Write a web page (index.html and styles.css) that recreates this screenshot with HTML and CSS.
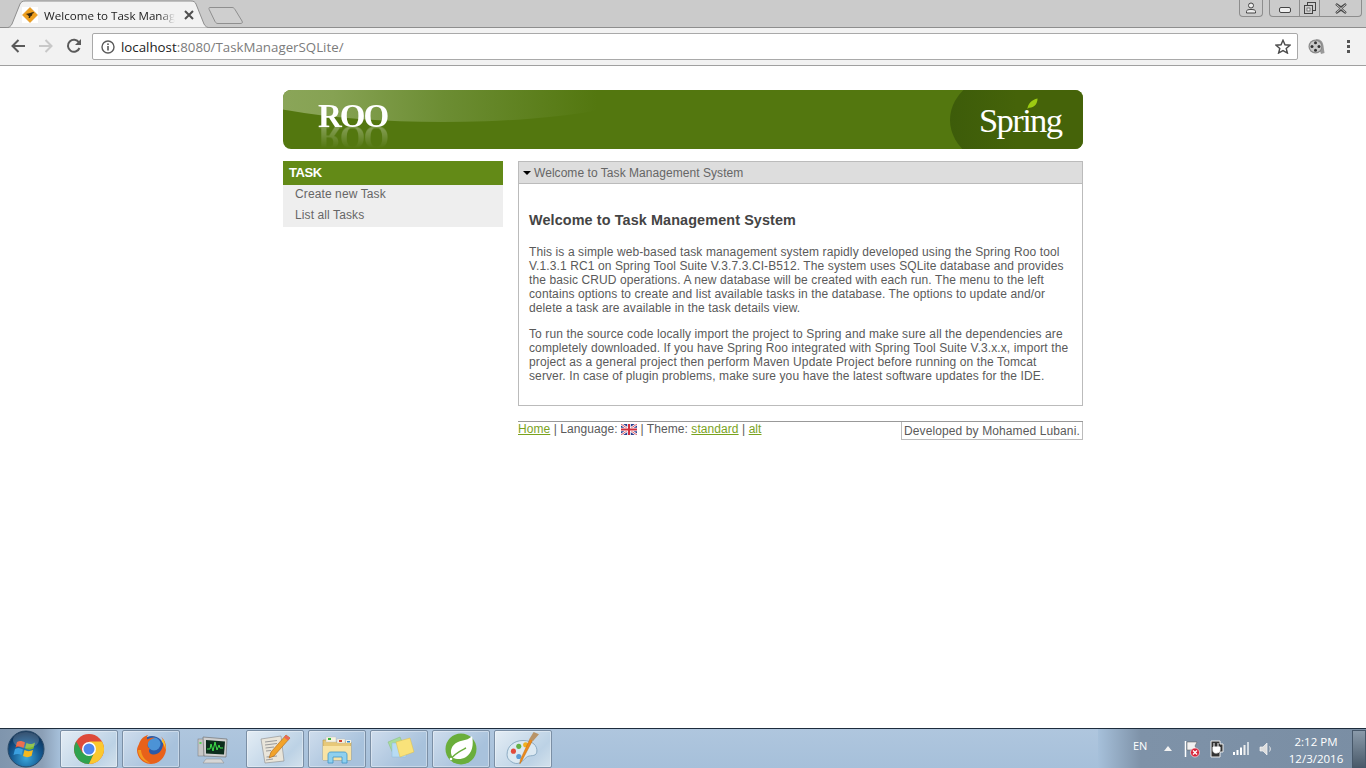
FILE: index.html
```html
<!DOCTYPE html>
<html lang="en">
<head>
<meta charset="utf-8">
<title>Welcome to Task Management System</title>
<link rel="stylesheet" href="styles.css">
</head>
<body>
<div class="screen">
  <div class="chrome">
    <div class="tabstrip">
      <div class="tab">
        <svg class="tab-shape" width="206" height="28" viewBox="0 0 206 28"><path d="M0.5 28 C4 28 6 26 7 24 L15 4 C16 2 17.500 1 20 1 L186 1 C189 1 190 2 191 4 L199 24 C200 26 202 28 206 28 Z" fill="#f2f2f2" stroke="#8e8e8e"/></svg>
        <svg class="favicon" width="16" height="16" viewBox="0 0 16 16"><rect width="16" height="16" fill="#fff"/><path d="M8 .5 15.500 8 8 15.500 .5 8Z" fill="#f0a01e" stroke="#d98a10" stroke-width=".6"/><path d="M3.500 7 6 6.500 8 6 9.500 5.500 11.500 5 12 6 10.500 6.500 10 8.500 8.500 9.500 8 11 6.500 11 7 9.500 6 8.500 5 7.500Z" fill="#3b2a10"/></svg>
        <span class="tab-title">Welcome to Task Manag</span>
        <svg class="tab-close" width="10" height="10" viewBox="0 0 10 10"><path d="M1 1 9 9M9 1 1 9" stroke="#4f4f4f" stroke-width="2"/></svg>
      </div>
      <svg class="newtab" width="36" height="19" viewBox="0 0 36 19"><path d="M2 1.500 H24 C25.500 1.500 26 2 27 3.500 L34 15 C35 17 34 17.500 32 17.500 H10 C8.500 17.500 8 17 7 15.500 L1.200 3.500 C.7 2 .8 1.500 2 1.500Z" fill="#cfcfcf" stroke="#8f8f8f"/></svg>
      <div class="winctl">
        <div class="winbtn user"><svg width="12" height="12" viewBox="0 0 12 12"><circle cx="6" cy="3.500" r="2.500" fill="#eee" stroke="#444"/><path d="M1.500 11V9.500C1.500 8 3 7.500 6 7.500S10.500 8 10.500 9.500V11Z" fill="#eee" stroke="#444"/></svg></div>
        <div class="wingroup">
          <div class="winbtn min"><svg width="12" height="6" viewBox="0 0 12 6"><rect x=".5" y=".5" width="11" height="5" rx="1.500" fill="#eee" stroke="#444"/></svg></div>
          <div class="winbtn max"><svg width="12" height="12" viewBox="0 0 12 12"><rect x="3.500" y=".5" width="8" height="8" fill="#ccc" stroke="#444"/><rect x=".5" y="3.500" width="8" height="8" fill="#ccc" stroke="#444"/><rect x="3" y="6" width="3" height="3" fill="#eee" stroke="#444" stroke-width=".6"/></svg></div>
          <div class="winbtn close"><svg width="14" height="11" viewBox="0 0 14 11"><path d="M2 1 7 4.500 12 1M2 10 7 6.500 12 10M2 1 12 10M12 1 2 10" fill="none" stroke="#444" stroke-width="2.200"/><path d="M2.500 1.500 11.500 9.500M11.500 1.500 2.500 9.500" stroke="#eee" stroke-width=".8"/></svg></div>
        </div>
      </div>
    </div>
    <div class="toolbar">
      <svg class="nav" width="16" height="16" viewBox="0 0 16 16"><path d="M15 8H3M8.500 2 2.500 8 8.500 14" fill="none" stroke="#5a5a5a" stroke-width="2"/></svg>
      <svg class="nav" width="16" height="16" viewBox="0 0 16 16"><path d="M1 8H13M7.500 2 13.500 8 7.500 14" fill="none" stroke="#c8c8c8" stroke-width="2"/></svg>
      <svg class="nav" width="16" height="16" viewBox="0 0 16 16"><path d="M13.500 10A6 6 0 1 1 13 4.500" fill="none" stroke="#5a5a5a" stroke-width="2"/><path d="M15 1V7H9Z" fill="#5a5a5a"/></svg>
      <div class="omnibox">
        <svg class="info" width="14" height="14" viewBox="0 0 14 14"><circle cx="7" cy="7" r="6" fill="none" stroke="#5a5a5a" stroke-width="1.400"/><rect x="6.200" y="6" width="1.600" height="4.500" fill="#5a5a5a"/><rect x="6.200" y="3.400" width="1.600" height="1.600" fill="#5a5a5a"/></svg>
        <span class="url"><span class="host">localhost</span>:8080/TaskManagerSQLite/</span>
        <svg class="star" width="16" height="15" viewBox="0 0 16 15"><path d="M8 1.200 10 5.800 15 6.200 11.200 9.500 12.400 14 8 11.600 3.600 14 4.800 9.500 1 6.200 6 5.800Z" fill="none" stroke="#4a4a4a" stroke-width="1.400"/></svg>
      </div>
      <svg class="ext" width="17" height="17" viewBox="0 0 17 17"><path d="M8 1C13 1 15 4 15.500 8L16.500 15 13 16Z" fill="#9a9a9a"/><circle cx="7.500" cy="8.500" r="7" fill="#8a8a8a"/><circle cx="7.500" cy="8.500" r="5.800" fill="#c9c9c9"/><circle cx="7.500" cy="4.800" r="1.500" fill="#333"/><circle cx="7.500" cy="12.200" r="1.500" fill="#333"/><circle cx="4" cy="8.500" r="1.500" fill="#333"/><circle cx="11" cy="8.500" r="1.500" fill="#333"/></svg>
      <div class="menu-dots"><i></i><i></i><i></i></div>
    </div>
  </div>

  <div class="page">
    <div class="wrapper">
      <header class="banner">
        <div class="glow"></div>
        <div class="roo">ROO</div>
        <div class="spring">
          <span class="spring-word">Spring</span>
          <svg class="leaf" width="11" height="12" viewBox="0 0 12 13"><path d="M.5 12C1 6 5 2 11.500 .5 11.500 7 7 11 2 10.500L.5 12Z" fill="#9ccb12"/></svg>
        </div>
      </header>
      <div class="columns">
        <nav class="menu">
          <h2 class="menu-head">TASK</h2>
          <ul class="menu-list">
            <li>Create new Task</li>
            <li>List all Tasks</li>
          </ul>
        </nav>
        <div class="main">
          <section class="panel">
            <div class="panel-title"><span class="arrow"></span>Welcome to Task Management System</div>
            <div class="panel-body">
              <h3 class="heading">Welcome to Task Management System</h3>
              <p>This is a simple web-based task management system rapidly developed using the Spring Roo tool V.1.3.1 RC1 on Spring Tool Suite V.3.7.3.CI-B512. The system uses SQLite database and provides the basic CRUD operations. A new database will be created with each run. The menu to the left contains options to create and list available tasks in the database. The options to update and/or delete a task are available in the task details view.</p>
              <p>To run the source code locally import the project to Spring and make sure all the dependencies are completely downloaded. If you have Spring Roo integrated with Spring Tool Suite V.3.x.x, import the project as a general project then perform Maven Update Project before running on the Tomcat server. In case of plugin problems, make sure you have the latest software updates for the IDE.</p>
            </div>
          </section>
          <footer class="foot">
            <div class="foot-links"><a href="#">Home</a> | Language: <svg class="flag" width="16" height="11" viewBox="0 0 16 11"><rect width="16" height="11" fill="#2a3f8f"/><path d="M0 0 16 11M16 0 0 11" stroke="#fff" stroke-width="2.400"/><path d="M0 0 16 11M16 0 0 11" stroke="#d03040" stroke-width=".8"/><path d="M8 0V11M0 5.500H16" stroke="#fff" stroke-width="3.600"/><path d="M8 0V11M0 5.500H16" stroke="#d03040" stroke-width="2"/></svg> | Theme: <a href="#">standard</a> | <a href="#">alt</a></div>
            <div class="credit">Developed by Mohamed Lubani.</div>
          </footer>
        </div>
      </div>
    </div>
  </div>

  <div class="taskbar">
    <div class="orb-wrap">
      <svg class="orb" width="38" height="38" viewBox="0 0 38 38">
        <defs><radialGradient id="og" cx=".5" cy=".75" r=".7"><stop offset="0" stop-color="#3ba7dc"/><stop offset=".6" stop-color="#14578f"/><stop offset="1" stop-color="#0c2f55"/></radialGradient></defs>
        <circle cx="19" cy="19" r="18" fill="url(#og)" stroke="#2a4a68"/>
        <path d="M10 12C13 10.500 15 11 18 12.500L16.500 18C14 16.500 11.500 16 8.500 17.500Z" fill="#e8502a"/>
        <path d="M19.500 13C22 14.500 25 14.500 28 12.500L26.500 18.500C23.500 20 21 20 18 18.500Z" fill="#7cb82f"/>
        <path d="M8 19C11 17.500 13.500 18 16 19.500L14.500 25C12 23.500 9.500 23.500 6.500 25Z" fill="#3ba0e0"/>
        <path d="M17.500 20C20 21.500 23 21.500 26 20L24.500 26C21.500 27.500 19 27.500 16 26Z" fill="#f5b81f"/>
        <ellipse cx="19" cy="10" rx="13" ry="8" fill="#fff" opacity=".18"/>
      </svg>
    </div>
    <div class="tb active">
      <svg width="32" height="32" viewBox="0 0 32 32"><circle cx="16" cy="16" r="15" fill="#dd4a3a"/><path d="M3 23.500A15 15 0 0 0 16 31L23 16H16L9.500 19.700 3.200 8.600A15 15 0 0 0 3 23.500Z" fill="#2fa24f"/><path d="M16 31A15 15 0 0 0 29 8.500H16L23 16Z" fill="#fbc82e"/><circle cx="16" cy="16" r="7" fill="#fff"/><circle cx="16" cy="16" r="5.500" fill="#4f86ec"/></svg>
    </div>
    <div class="tb">
      <svg width="32" height="32" viewBox="0 0 32 32"><circle cx="17" cy="15" r="12" fill="#2b5aa8"/><circle cx="19" cy="11" r="6.500" fill="#4c93d6"/><path d="M4 11C5.500 6 9 3 13 2 11.500 4 11.500 5.500 12.500 6.500 14.500 5 17 4.500 20 5 16 6 13.500 7.500 13 10 12 13 13 15 15 15.500 13 17.500 14 21 18 21.500 23 22 27 18 28 12 29 9 28 6 26 3.500 30 7 31.500 12 31 17 30 25 23.500 31 16 31 8 31 2 24.500 2 17 2 15 3 13 4 11Z" fill="#e8611a"/><path d="M28 6C30 9 31 13 30.500 17 29.500 13 28.500 10 26.500 8Z" fill="#f9c22e"/><path d="M3 17C3 23 8 29 15 30 10 27 6.500 23 6 17Z" fill="#f39a1f"/></svg>
    </div>
    <div class="tb flat">
      <svg width="32" height="32" viewBox="0 0 32 32"><path d="M9 26H24L27 30H6Z" fill="#d6d6d6" stroke="#888" stroke-width=".5"/><rect x="1" y="6" width="6" height="17" fill="#c7c7c7" stroke="#777" stroke-width=".5"/><rect x="2.500" y="9" width="2" height="2" fill="#5bd65b"/><path d="M6 4 30 6 29 24 7 23Z" fill="#cfcfcf" stroke="#666" stroke-width=".6"/><path d="M9 7 28 8.500 27 21.500 9 20.500Z" fill="#0c2c1c"/><path d="M10 16H13L14 11 16 18 18 9 20 17 22 12 23 15 26 15" fill="none" stroke="#3fe04a" stroke-width="1"/></svg>
    </div>
    <div class="tb active">
      <svg width="32" height="32" viewBox="0 0 32 32"><path d="M2 6 22 3 25 28 6 30Z" fill="#e9e5da" stroke="#8a8a8a" stroke-width=".6"/><path d="M6 9 18 7.500M6 12 18 10.500M6.500 15 15 14M7 18 12 17.500M7.500 24 18 23M7 27 14 26" stroke="#9a9a9a" stroke-width="1"/><path d="M27 2 31 5 15 23 10 25 12 19Z" fill="#f2a32a" stroke="#a9651a" stroke-width=".6"/><path d="M27 2 31 5 29 7.500 25 4.500Z" fill="#e8675a"/></svg>
    </div>
    <div class="tb">
      <svg width="32" height="32" viewBox="0 0 32 32"><path d="M2 7H13L15 9H30V27H2Z" fill="#e7c878" stroke="#b39445" stroke-width=".6"/><rect x="5" y="4" width="10" height="5" fill="#f7f3e0" stroke="#bbb" stroke-width=".4"/><rect x="7" y="5" width="3" height="2" fill="#3cb43c"/><rect x="16" y="6" width="8" height="4" fill="#f7f3e0" stroke="#bbb" stroke-width=".4"/><rect x="18" y="7" width="3" height="2" fill="#d0402f"/><rect x="25" y="7" width="5" height="3" fill="#f7f3e0"/><rect x="26" y="8" width="3" height="1.500" fill="#2f86d0"/><path d="M2 13H30V27H2Z" fill="#f8e3a4"/><path d="M7 30V22C7 20 8 19 10 19H23C25 19 26 20 26 22V30H21V24H12V30Z" fill="#8fd0ef" stroke="#3f94c7" stroke-width=".8"/></svg>
    </div>
    <div class="tb">
      <svg width="32" height="32" viewBox="0 0 32 32"><path d="M5 9 17 4 23 18 11 23Z" fill="#a8dc9c" stroke="#86bb7c" stroke-width=".5"/><path d="M9 10H23V24H9Z" fill="#b7dbf3" stroke="#8db8d8" stroke-width=".5"/><path d="M13 9 27 5 31 19 17 24Z" fill="#f9e27a" stroke="#d8bd4e" stroke-width=".5"/></svg>
    </div>
    <div class="tb">
      <svg width="32" height="32" viewBox="0 0 32 32"><circle cx="16" cy="16" r="15.500" fill="#6aae3b"/><path d="M8 25C4 19 6 12 13 9 18 7 24 7 27 3 29 12 27 20 21 24 16 27 11 26 8 25Z" fill="#fff"/><path d="M5 27C10 20 15 18 21 15" fill="none" stroke="#6aae3b" stroke-width="1.400"/><circle cx="6" cy="26" r="1.300" fill="#fff"/></svg>
    </div>
    <div class="tb active">
      <svg width="34" height="34" viewBox="0 0 32 32"><path d="M1 21C1 13 8 8 16 8 25 8 30 13 29 19 28 24 22 21 19 24 15 28 12 31 7 29 3 27 1 25 1 21Z" fill="#dce9f2" stroke="#7ea0ba" stroke-width=".8"/><circle cx="7" cy="18" r="2.400" fill="#e24a3b"/><circle cx="12" cy="13.500" r="2.400" fill="#62b046"/><circle cx="18.500" cy="12" r="2.400" fill="#f0b020"/><circle cx="12" cy="23" r="2.400" fill="#5b9bd5"/><path d="M25 8 15 27 13 30 13.500 26 22.500 6.500Z" fill="#ec8a1c" stroke="#b7640c" stroke-width=".4"/><path d="M22 6.500 26 0 31 2 25.500 8.500Z" fill="#b89468"/></svg>
    </div>
    <div class="tray">
      <span class="lang">EN</span>
      <span class="tri"></span>
      <svg class="t-flag" width="16" height="18" viewBox="0 0 16 18"><path d="M1.500 1V17" stroke="#fff" stroke-width="1.500"/><path d="M3 2H13L11 6 13 10H3Z" fill="#f1f1f1" stroke="#555" stroke-width=".5"/><circle cx="11" cy="12.500" r="4.500" fill="#d8243a" stroke="#fff" stroke-width=".6"/><path d="M9 10.500 13 14.500M13 10.500 9 14.500" stroke="#fff" stroke-width="1.300"/></svg>
      <svg class="t-plug" width="14" height="18" viewBox="0 0 14 18"><path d="M1 1H10V4H13V12H10V17H1Z" fill="#333" stroke="#eee"/><path d="M4 3V7M8 3V7M3 7H10V10C10 12 8 13 6 13 4 13 3 12 3 10Z" fill="#fff" stroke="#fff"/></svg>
      <svg class="t-signal" width="16" height="13" viewBox="0 0 16 13"><rect x="0" y="10" width="2" height="3" fill="#fff"/><rect x="3.500" y="8" width="2" height="5" fill="#fff"/><rect x="7" y="5.500" width="2" height="7.500" fill="#fff"/><rect x="10.500" y="3" width="2" height="10" fill="#eee"/><rect x="14" y="0" width="2" height="13" fill="#cfd8e0"/></svg>
      <svg class="t-vol" width="14" height="14" viewBox="0 0 14 14"><path d="M1 5H4L8 1V13L4 9H1Z" fill="#ddd" stroke="#f5f5f5" stroke-width=".7"/><path d="M10.500 4.500C11.500 6 11.500 8 10.500 9.500" fill="none" stroke="#eee"/></svg>
      <div class="clock"><span>2:12 PM</span><span>12/3/2016</span></div>
      <div class="showdesk"></div>
    </div>
  </div>
</div>
</body>
</html>
```
FILE: styles.css
```css
* { box-sizing: border-box; }
html, body { margin: 0; padding: 0; height: 100%; overflow: hidden; background: #fff; }
.screen { width: 1366px; height: 768px; display: flex; flex-direction: column; font-family: "Liberation Sans", Arial, sans-serif; }

/* Browser chrome */
.chrome { height: 66px; flex: none; display: flex; flex-direction: column; }
.tabstrip { height: 28px; background: #cbcbcb; display: flex; padding-left: 5px; position: relative; border-bottom: 1px solid #8e8e8e; }
.tab { width: 206px; height: 28px; position: relative; display: flex; align-items: center; padding: 2px 0 0 17px; flex: none; }
.tab-shape { position: absolute; left: 0; top: 0; }
.favicon { position: relative; flex: none; }
.tab-title { position: relative; margin-left: 6px; width: 131px; overflow: hidden; white-space: nowrap; font: 11.600px "Open Sans", sans-serif; color: #222; -webkit-mask-image: linear-gradient(to right, #000 88%, transparent); mask-image: linear-gradient(to right, #000 88%, transparent); }
.tab-close { position: relative; margin-left: 9px; flex: none; }
.newtab { flex: none; margin: 6px 0 0 -3px; }
.winctl { margin-left: auto; display: flex; gap: 6px; padding-right: 4px; height: 17px; }
.winbtn { display: flex; align-items: center; justify-content: center; height: 17px; }
.user { width: 24px; border: 1px solid #8d8d8d; border-top: 0; border-radius: 0 0 4px 4px; }
.wingroup { display: flex; width: 93px; border: 1px solid #8d8d8d; border-top: 0; border-radius: 0 0 4px 4px; height: 17px; }
.wingroup .winbtn { height: 16px; }
.min { width: 29px; padding-top: 4px; }
.max { width: 21px; border-left: 1px solid #8d8d8d; border-right: 1px solid #8d8d8d; }
.close { flex: 1; }
.toolbar { height: 38px; background: #f2f2f2; border-bottom: 1px solid #a0a0a0; display: flex; align-items: center; padding: 0 0 1px 10px; }
.nav { flex: none; margin-right: 12px; }
.nav:nth-child(3) { margin-right: 10px; }
.omnibox { width: 1206px; height: 27px; margin-top: 1px; background: #fff; border: 1px solid #a9a9a9; border-radius: 2px; display: flex; align-items: center; padding: 0 6px 0 8px; }
.info { flex: none; }
.url { margin-left: 6px; font: 13.300px "Open Sans", sans-serif; color: #7c7c7c; white-space: nowrap; }
.host { color: #222; }
.star { margin-left: auto; flex: none; }
.ext { margin-left: 10px; flex: none; }
.menu-dots { margin-left: 22px; display: flex; flex-direction: column; gap: 2px; }
.menu-dots i { width: 3px; height: 3px; background: #555; display: block; }

/* Page */
.page { flex: 1; min-height: 0; padding-top: 24px; background: #fff; }
.wrapper { width: 800px; margin-left: 283px; color: #5a5a5a; font-size: 12px; letter-spacing: .11px; }
.banner { height: 59px; border-radius: 8px; background: #53770f; position: relative; overflow: hidden; }
.glow { position: absolute; left: -60px; top: -48px; width: 440px; height: 80px; border-radius: 50%; background: linear-gradient(to right, #8fa95f 0, #86a253 25%, #6c8d33 50%, #53770f 85%); }
.roo { position: absolute; left: 35px; top: 8px; width: 80px; height: 36px; font: bold 33px/36px "Liberation Serif", serif; letter-spacing: -2px; color: #fff; -webkit-box-reflect: below -14.600px linear-gradient(transparent 20%, rgba(255,255,255,.4)); }
.spring { position: absolute; right: 0; top: -20px; width: 133px; height: 100px; border-radius: 50% 0 0 50% / 50% 0 0 50%; background: linear-gradient(to right, #3d5c0a, #456309 50%); }
.spring-word { position: absolute; left: 29px; top: 30px; font: 34.500px/40px "Liberation Serif", serif; letter-spacing: -1.600px; color: #fff; }
.leaf { position: absolute; left: 77px; top: 28px; }
.columns { display: flex; margin-top: 12px; align-items: flex-start; }
.menu { width: 220px; flex: none; }
.menu-head { margin: 0; height: 24px; background: #638a17; color: #fff; font-size: 13px; font-weight: bold; line-height: 24px; padding-left: 6px; letter-spacing: -.4px; }
.menu-list { margin: 0; padding: 0; list-style: none; background: #eee; }
.menu-list li { height: 21px; line-height: 19px; padding-left: 12px; color: #666; }
.main { width: 565px; margin-left: 15px; flex: none; }
.panel { border: 1px solid #bbb; height: 245px; }
.panel-title { height: 22px; background: #ddd; border-bottom: 1px solid #bbb; line-height: 21px; display: flex; align-items: center; color: #666; padding: 1px 0 0 4px; letter-spacing: .05px; }
.arrow { width: 0; height: 0; border: 4px solid transparent; border-top: 4px solid #000; border-bottom: 0; margin-right: 3px; }
.panel-body { padding: 16px 10px 0; }
.heading { margin: 12px 0 0; font-size: 14.400px; line-height: 17px; color: #444; }
.panel-body p { margin: 0 0 12px; line-height: 14px; }
.heading + p { margin-top: 16px; }
.foot { margin-top: 15px; border-top: 1px solid #999; display: flex; justify-content: space-between; align-items: flex-start; }
.foot-links { line-height: 14px; padding-top: 0; letter-spacing: .07px; }
.foot-links a { color: #7aa31e; text-decoration: underline; }
.flag { vertical-align: -2px; }
.credit { border: 1px solid #bbb; border-top: 0; height: 18px; width: 182px; line-height: 18px; padding-left: 2px; white-space: nowrap; }

/* Taskbar */
.taskbar { height: 40px; flex: none; border-top: 1px solid #1d2c3c; background: linear-gradient(to bottom, #afc6de, #a6c0da); display: flex; align-items: stretch; position: relative; }
.orb-wrap { width: 60px; flex: none; padding: 1px 0 0 7px; background: linear-gradient(to right, #7f95ad, #8b9fb6 70%, #a6c0da); }
.orb { display: block; }
.tb { width: 58px; height: 38px; flex: none; margin-top: 1px; margin-right: 4px; border: 1px solid #7b8fa5; border-radius: 2px; background: linear-gradient(135deg, #cfdded, #a8c2dc 70%); display: flex; align-items: center; justify-content: center; box-shadow: inset 0 0 0 1px rgba(255,255,255,.35); }
.tb.active { background: linear-gradient(135deg, #e4edf5, #bcd2e5 70%, #d3e1ec); }
.tb.flat { border-color: transparent; background: none; box-shadow: none; }
.tray { margin-left: auto; width: 268px; flex: none; display: flex; align-items: center; position: relative; background: linear-gradient(to right, #a6c0da 0, #7e92a8 16%, #7a8ea4 100%); color: #fff; padding-left: 35px; }
.lang { font: 11px "Open Sans", sans-serif; margin-top: -6px; width: 31px; flex: none; }
.tri { width: 0; height: 0; border: 4px solid transparent; border-bottom: 5px solid #f2f2f2; border-top: 0; margin-right: 12px; flex: none; }
.t-flag { flex: none; margin-right: 10px; }
.t-plug { flex: none; margin-right: 9px; }
.t-signal { flex: none; margin-right: 10px; }
.t-vol { flex: none; }
.clock { margin-left: 10px; width: 66px; display: flex; flex-direction: column; align-items: center; font: 11.500px/17px "Open Sans", sans-serif; color: #fff; flex: none; padding-top: 2px; }
.showdesk { position: absolute; right: 0; top: 1px; width: 14px; height: 38px; border: 1px solid #47586a; background: linear-gradient(to bottom, #8a9aaa, #4a5a6a); }
```
